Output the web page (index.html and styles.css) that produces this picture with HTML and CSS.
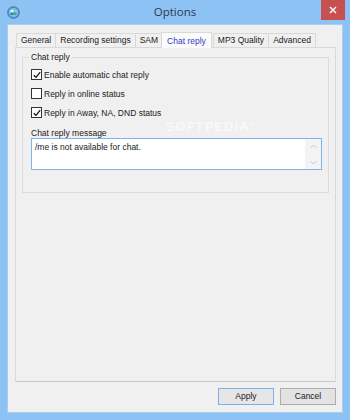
FILE: index.html
```html
<!DOCTYPE html>
<html>
<head>
    <title>Options</title>
    <link rel="stylesheet" href="styles.css">
</head>
<body>
    <div class="window">
        <div class="title-bar">
            <div class="app-icon">
                <svg width="13" height="13" viewBox="0 0 13 13">
                    <circle cx="6.5" cy="6.5" r="6" fill="#3f8fd0" stroke="#6b7f93" stroke-width="0.8"/>
                    <circle cx="6.5" cy="6.5" r="4.6" fill="#7ec3ee"/>
                    <rect x="3.5" y="4" width="3" height="2.5" fill="#e9f4fb"/>
                    <rect x="6.5" y="6.5" width="3" height="2.5" fill="#4fb048"/>
                    <rect x="3.5" y="6.5" width="3" height="2.5" fill="#2f7fc4"/>
                </svg>
            </div>
            <div class="title">Options</div>
            <div class="close-btn">
                <svg width="8" height="8" viewBox="0 0 8 8">
                    <path d="M1 1 L7 7 M7 1 L1 7" stroke="#fff" stroke-width="1.4"/>
                </svg>
            </div>
        </div>

        <div class="client">
            <div class="tabs">
                <div class="tab">General</div>
                <div class="tab">Recording settings</div>
                <div class="tab">SAM</div>
                <div class="tab active">Chat reply</div>
                <div class="tab">MP3 Quality</div>
                <div class="tab">Advanced</div>
            </div>

            <div class="panel">
                <fieldset class="group">
                    <legend>Chat reply</legend>
                    <div class="check-row">
                        <span class="checkbox checked">
                            <svg width="8" height="8" viewBox="0 0 8 8"><path d="M0.8 4.2 L3 6.4 L7.2 1.2" fill="none" stroke="#111" stroke-width="1.3"/></svg>
                        </span>
                        Enable automatic chat reply
                    </div>
                    <div class="check-row">
                        <span class="checkbox"></span>
                        Reply in online status
                    </div>
                    <div class="check-row">
                        <span class="checkbox checked">
                            <svg width="8" height="8" viewBox="0 0 8 8"><path d="M0.8 4.2 L3 6.4 L7.2 1.2" fill="none" stroke="#111" stroke-width="1.3"/></svg>
                        </span>
                        Reply in Away, NA, DND status
                    </div>

                    <div class="field-label">Chat reply message</div>
                    <div class="memo">
                        <div class="memo-text">/me is not available for chat.</div>
                        <div class="memo-scroll">
                            <svg width="7" height="5" viewBox="0 0 7 5"><path d="M0.5 4 L3.5 1 L6.5 4" fill="none" stroke="#c2c2c2" stroke-width="1"/></svg>
                            <svg width="7" height="5" viewBox="0 0 7 5"><path d="M0.5 1 L3.5 4 L6.5 1" fill="none" stroke="#c2c2c2" stroke-width="1"/></svg>
                        </div>
                    </div>
                </fieldset>
                <div class="watermark">SOFTPEDIA<sup>®</sup></div>
            </div>

            <div class="buttons">
                <div class="btn default">Apply</div>
                <div class="btn">Cancel</div>
            </div>
        </div>
    </div>
</body>
</html>
```

FILE: styles.css
```css
body { margin: 0; padding: 0; font-family: "Liberation Sans", Arial, sans-serif; font-size: 8.5px; color: #1a1a1a; }
.window { width: 350px; height: 420px; background: #8cc3f4; display: flex; flex-direction: column; }

.title-bar { height: 24px; display: grid; grid-template-columns: 40px 1fr 40px; align-items: start; }
.app-icon { padding: 6px 0 0 7px; }
.title { text-align: center; font-family: "Open Sans", sans-serif; font-size: 11.5px; color: #2b3a4a; padding-top: 4px; }
.close-btn { justify-self: end; margin-right: 5px; width: 24px; height: 20px; background: #c75050; display: flex; align-items: center; justify-content: center; }

.client { flex: 1; margin: 0 7px 7px 7px; background: #f0f0f0; border: 1px solid #a9cdef; display: flex; flex-direction: column; padding: 6px 6px 0 7px; }

.tabs { display: flex; align-items: flex-end; height: 16px; padding-left: 1px; }
.tab { height: 13px; line-height: 13px; padding: 0 4px; border: 1px solid #d9d9d9; border-bottom: none; margin-right: -1px; background: #f0f0f0; white-space: nowrap; }
.tab.active { height: 15px; line-height: 16px; background: #fbfbfb; color: #3838c8; padding: 0 5px; position: relative; z-index: 1; margin: 0 1px -1px -1px; }

.panel { position: relative; box-sizing: border-box; height: 335px; border: 1px solid #d9d9d9; border-bottom-color: #c8c8c8; background: #f0f0f0; padding: 4px 6px 0 6px; }

.group { margin: 0; border: 1px solid #dcdcdc; padding: 3px 6px 0 8px; height: 141px; box-sizing: border-box; }
.group legend { padding: 0 2px; margin-left: -2px; }

.check-row { display: flex; align-items: center; height: 19px; gap: 2px; }
.checkbox { width: 9px; height: 9px; border: 1px solid #333; background: #fff; display: inline-flex; align-items: center; justify-content: center; }

.field-label { margin-top: 6px; height: 10px; }
.memo { display: flex; height: 30px; border: 1px solid #7eb4ea; background: #fff; }
.memo-text { flex: 1; padding: 3px 3px; }
.memo-scroll { width: 16px; background: #f4f4f4; display: flex; flex-direction: column; justify-content: space-between; align-items: center; padding: 5px 0 4px; }

.watermark { position: absolute; left: 150px; top: 71px; font-size: 13px; font-weight: bold; letter-spacing: 1px; color: rgba(255, 255, 255, 0.6); pointer-events: none; }
.watermark sup { font-size: 6px; }

.buttons { display: flex; justify-content: flex-end; gap: 6px; padding: 6px 0 0 0; }
.btn { width: 54px; height: 15px; line-height: 15px; text-align: center; border: 1px solid #adadad; background: #e3e3e3; }
.btn.default { border-color: #79b1e8; background: #e6e6e6; }
```
